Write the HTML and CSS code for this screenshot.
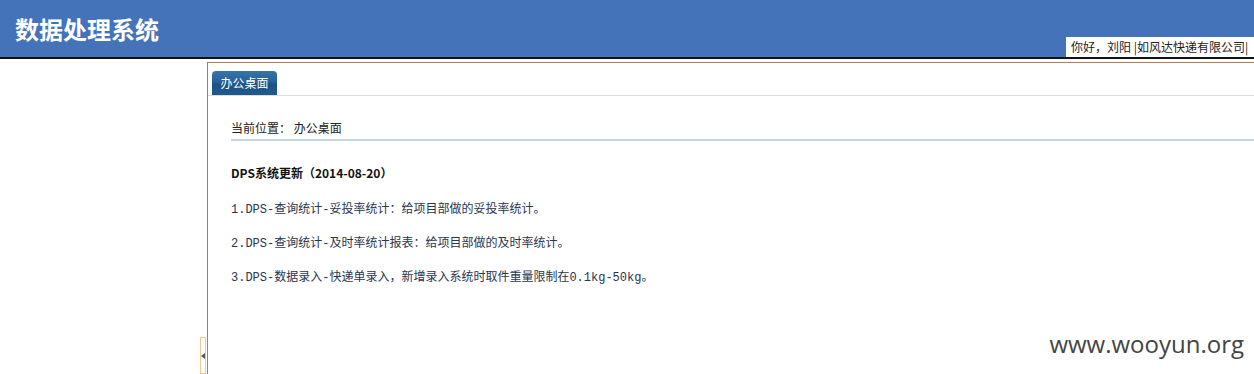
FILE: index.html
```html
<!DOCTYPE html>
<html lang="zh-CN">
<head>
    <meta charset="UTF-8">
    <title>数据处理系统</title>
    <link rel="stylesheet" href="styles.css">
</head>
<body>
    <div class="header">
        <h1>数据处理系统</h1>
        <div class="greeting">你好，刘阳 |如风达快递有限公司|</div>
    </div>

    <div class="main">
        <div class="sidebar"></div>
        <div class="splitter">
            <div class="toggle"><span class="arrow"></span></div>
        </div>
        <div class="frame">
            <div class="tabs">
                <div class="tab">办公桌面</div>
            </div>
            <div class="content">
                <div class="location">当前位置： 办公桌面</div>
                <h2>DPS系统更新（2014-08-20）</h2>
                <div class="items">
                    <p class="item">1.DPS-查询统计-妥投率统计：给项目部做的妥投率统计。</p>
                    <p class="item">2.DPS-查询统计-及时率统计报表：给项目部做的及时率统计。</p>
                    <p class="item">3.DPS-数据录入-快递单录入，新增录入系统时取件重量限制在0.1kg-50kg。</p>
                </div>
            </div>
        </div>
    </div>

    <div class="watermark">www.wooyun.org</div>
</body>
</html>
```

FILE: styles.css
```css
body {
    margin: 0;
    padding: 0;
    font-family: "Noto Sans CJK SC", "Liberation Sans", sans-serif;
    font-size: 12px;
    color: #222;
    background: #fff;
    height: 374px;
    overflow: hidden;
}
.header {
    position: relative;
    height: 57px;
    background: #4473ba;
    border-bottom: 2px solid #111;
}
.header h1 {
    margin: 0;
    padding: 14px 0 0 15px;
    font-size: 24px;
    line-height: 30px;
    color: #fff;
    font-weight: bold;
}
.greeting {
    position: absolute;
    right: 0;
    bottom: 0;
    width: 188px;
    height: 20px;
    line-height: 20px;
    padding-left: 5px;
    box-sizing: border-box;
    background: #fff;
    color: #222;
    font-size: 12px;
    white-space: nowrap;
}
.main {
    display: flex;
    height: 315px;
}
.sidebar {
    width: 200px;
}
.splitter {
    width: 7px;
    display: flex;
    align-items: flex-end;
}
.toggle {
    width: 4px;
    height: 35px;
    border: 1px solid #f7c48e;
    background: #fff;
    display: flex;
    align-items: center;
    justify-content: center;
}
.arrow {
    width: 0;
    height: 0;
    border-top: 3px solid transparent;
    border-bottom: 3px solid transparent;
    border-right: 4px solid #555;
}
.frame {
    flex: 1;
    margin-top: 3px;
    border-left: 1px solid #b07a52;
    border-top: 1px solid #b07a52;
}
.tabs {
    height: 24px;
    padding: 8px 0 0 4px;
    border-bottom: 1px solid #dcdcdc;
}
.tab {
    display: inline-block;
    width: 65px;
    height: 24px;
    line-height: 24px;
    text-align: center;
    color: #fff;
    border-radius: 4px 4px 0 0;
    background: linear-gradient(#3573a8, #276299 45%, #1d5283 55%, #1f5a8c);
}
.content {
    padding: 0 0 0 23px;
}
.location {
    padding-top: 21px;
    height: 22px;
    line-height: 22px;
    border-bottom: 2px solid #c5d6e4;
}
.content h2 {
    margin: 23px 0 0;
    font-size: 12px;
    font-weight: bold;
    line-height: 18px;
    color: #111;
}
.items {
    padding-top: 3px;
}
.item {
    margin: 17px 0 0;
    line-height: 17px;
    font-family: "Liberation Mono", "Noto Sans CJK SC", monospace;
    font-size: 12px;
    color: #2a3550;
}
.watermark {
    position: absolute;
    right: 10px;
    bottom: 14px;
    font-family: "Open Sans", "Liberation Sans", sans-serif;
    font-size: 24px;
    color: #444;
}
```
